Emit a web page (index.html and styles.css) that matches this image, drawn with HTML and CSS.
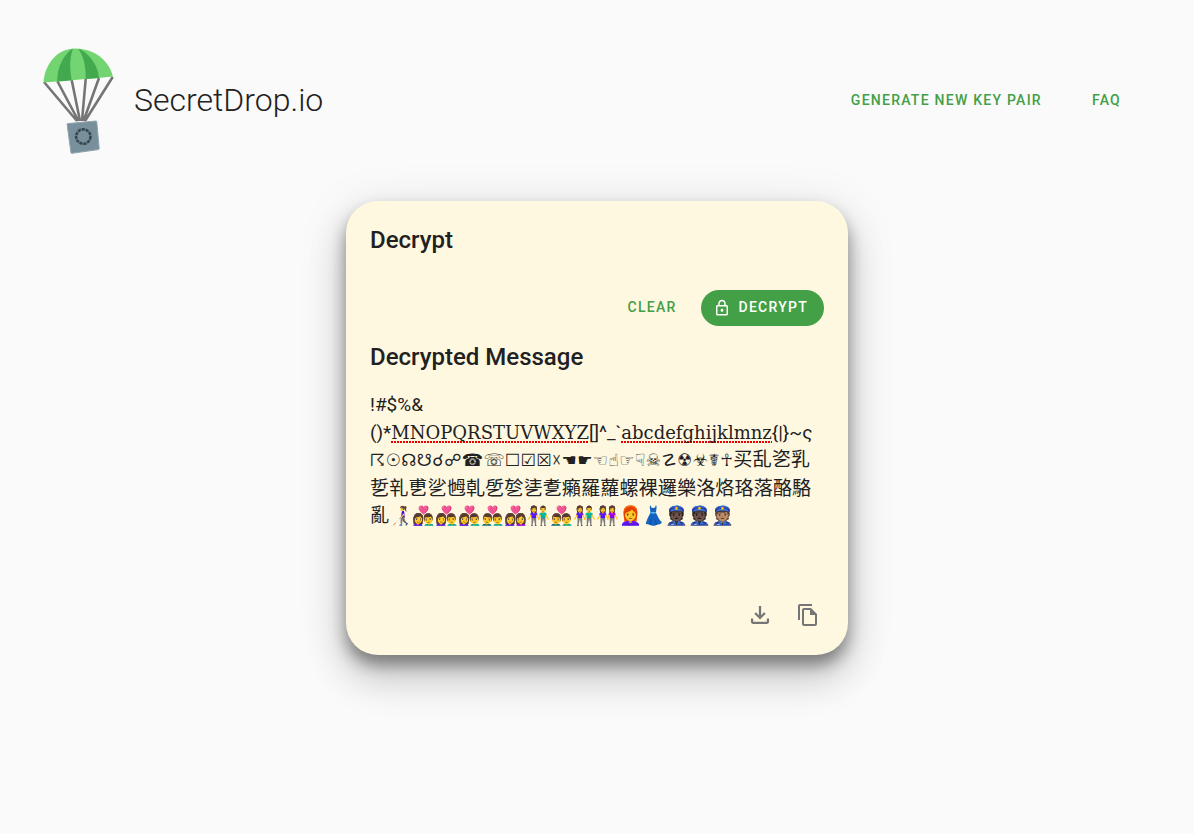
FILE: index.html
```html
<!DOCTYPE html>
<html lang="en">
<head>
<meta charset="utf-8">
<title>SecretDrop.io</title>
<link rel="stylesheet" href="styles.css">
</head>
<body>
<header class="header">
  <div class="brand">
    <svg class="logo" width="72" height="110" viewBox="0 1 72 110" aria-hidden="true">
      <g stroke="#757575" stroke-width="2.6" fill="none">
        <path d="M2 37 L35 76 M15.3 36 L36.5 76 M29.7 35 L38 76 M43.7 34 L40 76 M57 33 L41.5 76 M70.7 32 L43 76"/>
      </g>
      <path d="M1.5 37.5 C3 18 16 3.5 33 3.5 C52 3.5 67 15 71 31.5 C58 33 44 34 29.7 35.2 C20 36 10 37 1.5 37.5Z" fill="#72d572"/>
      <path d="M15.3 36.4 C15 22 22 9 31 3.6 C27 14 28 26 29.7 35.2Z" fill="#43a94f"/>
      <path d="M36 3.6 C47 8 56 20 57 33 L43.7 34 C44 22 42 12 36 3.6Z" fill="#43a94f"/>
      <path d="M25.8 78.6 L54 76 Q54.7 76 54.8 77 L57.2 103.5 Q57.3 104.5 56.3 104.6 L30 108.3 Q29 108.4 28.9 107.4 L25.1 79.4 Q25 78.7 25.8 78.6Z" fill="#78909c" stroke="#90a4ae" stroke-width="1"/>
      <circle cx="41.3" cy="91.6" r="7.2" fill="none" stroke="#37474f" stroke-width="2.6" stroke-dasharray="3.2 .8"/>
    </svg>
    <span class="title">SecretDrop.io</span>
  </div>
  <nav class="nav">
    <a class="nav-link">GENERATE NEW KEY PAIR</a>
    <a class="nav-link">FAQ</a>
  </nav>
</header>
<main class="main">
  <section class="card">
    <h2 class="card-title">Decrypt</h2>
    <div class="actions">
      <button class="btn-text">CLEAR</button>
      <button class="btn-fill">
        <svg width="18" height="18" viewBox="0 0 24 24" fill="#fff" aria-hidden="true"><path d="M18 8h-1V6c0-2.76-2.24-5-5-5S7 3.24 7 6v2H6c-1.1 0-2 .9-2 2v10c0 1.1.9 2 2 2h12c1.1 0 2-.9 2-2V10c0-1.1-.9-2-2-2zM9 6c0-1.66 1.34-3 3-3s3 1.34 3 3v2H9V6zm9 14H6V10h12v10zm-6-3c1.1 0 2-.9 2-2s-.9-2-2-2-2 .9-2 2 .9 2 2 2z"/></svg>
        <span class="btn-label">DECRYPT</span>
      </button>
    </div>
    <h2 class="msg-title">Decrypted Message</h2>
    <p class="msg"><span class="punct">!#$%&amp;</span><br><span class="punct">()*</span><span class="spell">MNOPQRSTUVWXYZ</span><span class="punct">[]^_`</span><span class="spell">abcdefghijklmnz</span><span class="punct">{|}~ς</span><br><span class="sym">☈☉☊☋☌☍☎☏☐☑☒☓☚☛☜☝☞☟☠☡☢☣☤☥</span>买乱乲乳<br>乴乵乶乷乸乹乺乻乼乽癩羅蘿螺裸邏樂洛烙珞落酪駱<br>亂<span class="emoji">👩‍🦯👩‍❤️‍👨👩‍❤️‍👨👩‍❤️‍👨👨‍❤️‍👨👩‍❤️‍👩👫👨‍❤️‍👨👫👭👩‍🦰👗👮🏿👮🏿👮🏽</span></p>
    <div class="tools">
      <svg width="24" height="24" viewBox="1.4 1.4 21.2 21.2" fill="#757575" aria-hidden="true"><path d="M18 15v3H6v-3H4v3c0 1.1.9 2 2 2h12c1.1 0 2-.9 2-2v-3h-2zm-1-4l-1.41-1.41L13 12.17V4h-2v8.17L8.41 9.59 7 11l5 5 5-5z"/></svg>
      <svg width="24" height="24" viewBox="0 0 24 24" fill="#757575" aria-hidden="true"><path d="M16 1H4c-1.1 0-2 .9-2 2v14h2V3h12V1zm-1 4H8c-1.1 0-1.99.9-1.99 2L6 21c0 1.1.89 2 1.99 2H19c1.1 0 2-.9 2-2V11l-6-6zM8 21V7h6v5h5v9H8z"/></svg>
    </div>
  </section>
</main>
</body>
</html>
```
FILE: styles.css
```css
html, body { margin: 0; padding: 0; }
body {
  width: 1194px;
  height: 834px;
  overflow: hidden;
  background: #fafafa;
  font-family: Roboto, "Noto Sans CJK SC", sans-serif;
  color: #212121;
}
.header {
  display: flex;
  align-items: center;
  justify-content: space-between;
  height: 201px;
  padding: 0 73px 0 42px;
  box-sizing: border-box;
}
.brand { display: flex; align-items: center; gap: 20px; }
.logo { display: block; }
.title { font-size: 32px; font-weight: 300; line-height: 40px; padding-bottom: 1px; }
.nav { display: flex; gap: 50px; padding-bottom: 1px; }
.nav-link {
  font-size: 14px;
  font-weight: 500;
  letter-spacing: 1.25px;
  color: #43a047;
}
.main { display: flex; justify-content: center; }
.card {
  width: 502px;
  height: 454px;
  box-sizing: border-box;
  padding: 23px 24px 24px;
  background: #fff8e1;
  border-radius: 32px;
  box-shadow: 0 10px 16px 0 rgba(0,0,0,.4), 0 24px 38px 3px rgba(0,0,0,.14), 0 9px 46px 8px rgba(0,0,0,.08);
  display: flex;
  flex-direction: column;
}
.card-title, .msg-title {
  margin: 0;
  font-size: 24px;
  font-weight: 500;
  line-height: 32px;
  color: #212121;
}
.actions {
  display: flex;
  justify-content: flex-end;
  align-items: center;
  gap: 24px;
  margin-top: 34px;
}
.btn-text, .btn-fill {
  border: 0;
  font-family: Roboto, sans-serif;
  font-size: 14px;
  font-weight: 500;
  letter-spacing: 1.25px;
  height: 36px;
}
.btn-text { background: none; color: #43a047; padding: 0 0 2px; }
.btn-fill {
  display: flex;
  align-items: center;
  gap: 8px;
  padding: 0 16px 0 12px;
  background: #43a047;
  color: #fff;
  border-radius: 18px;
}
.btn-label { padding-bottom: 2px; }
.msg-title { margin-top: 15px; }
.msg {
  margin: 18px 0 0;
  height: 142px;
  font-family: "DejaVu Serif", "DejaVu Sans", "Noto Sans CJK SC", serif;
  font-size: 19.2px;
  line-height: 27.5px;
  white-space: nowrap;
  color: #212121;
}
.punct { font-family: Roboto, sans-serif; font-size: 19px; }
.spell {
  font-size: 18px;
  background: repeating-linear-gradient(90deg, #e60000 0 2px, transparent 2px 3px) 0 100% / 100% 2px no-repeat;
}
.sym { font-size: 17px; letter-spacing: 0.42px; }
.emoji { font-size: 18.4px; }
.tools {
  display: flex;
  justify-content: flex-end;
  gap: 24px;
  margin: auto 4px 4px 0;
}
```
